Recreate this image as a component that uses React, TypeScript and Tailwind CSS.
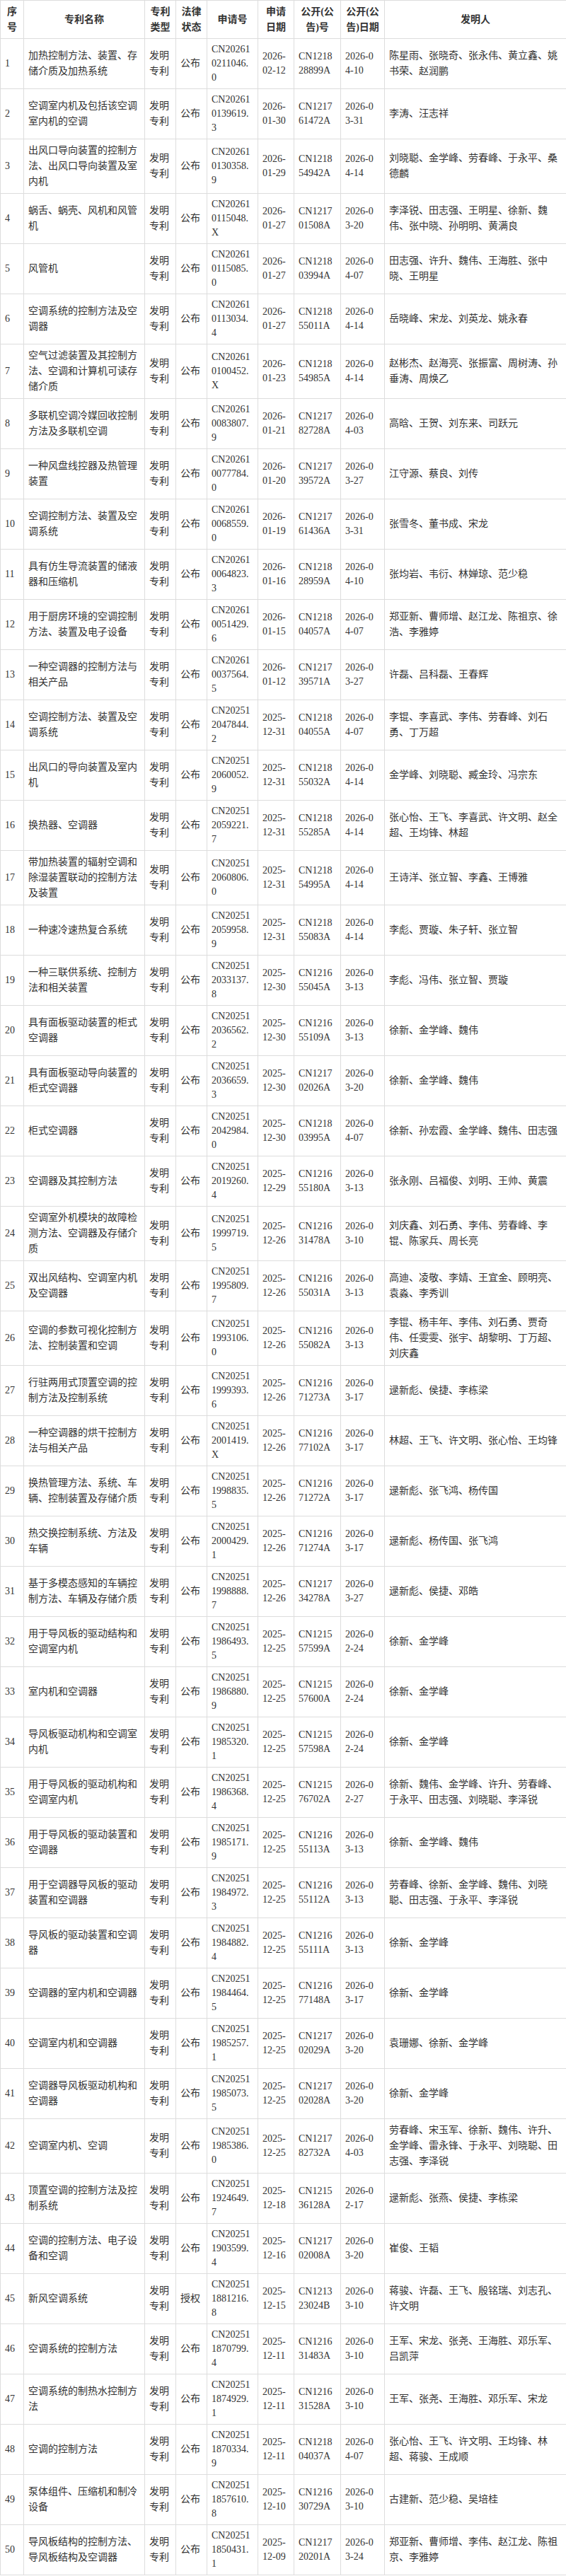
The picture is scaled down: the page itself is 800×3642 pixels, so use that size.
type Row = [number, string, string, string, string, string, string, string, string]

const FM = '发明专利'
const GB = '公布'

const rows: Row[] = [
  [1, '加热控制方法、装置、存储介质及加热系统', FM, GB, 'CN202610211046.0', '2026-02-12', 'CN121828899A', '2026-04-10', '陈星雨、张晓奇、张永伟、黄立鑫、姚书荣、赵润鹏'],
  [2, '空调室内机及包括该空调室内机的空调', FM, GB, 'CN202610139619.3', '2026-01-30', 'CN121761472A', '2026-03-31', '李涛、汪志祥'],
  [3, '出风口导向装置的控制方法、出风口导向装置及室内机', FM, GB, 'CN202610130358.9', '2026-01-29', 'CN121854942A', '2026-04-14', '刘晓聪、金学峰、劳春峰、于永平、桑德麟'],
  [4, '蜗舌、蜗壳、风机和风管机', FM, GB, 'CN202610115048.X', '2026-01-27', 'CN121701508A', '2026-03-20', '李泽锐、田志强、王明星、徐新、魏伟、张中晓、孙明明、黄满良'],
  [5, '风管机', FM, GB, 'CN202610115085.0', '2026-01-27', 'CN121803994A', '2026-04-07', '田志强、许升、魏伟、王海胜、张中晓、王明星'],
  [6, '空调系统的控制方法及空调器', FM, GB, 'CN202610113034.4', '2026-01-27', 'CN121855011A', '2026-04-14', '岳晓峰、宋龙、刘英龙、姚永春'],
  [7, '空气过滤装置及其控制方法、空调和计算机可读存储介质', FM, GB, 'CN202610100452.X', '2026-01-23', 'CN121854985A', '2026-04-14', '赵彬杰、赵海亮、张振富、周树涛、孙垂涛、周焕乙'],
  [8, '多联机空调冷媒回收控制方法及多联机空调', FM, GB, 'CN202610083807.9', '2026-01-21', 'CN121782728A', '2026-04-03', '高晗、王贺、刘东来、司跃元'],
  [9, '一种风盘线控器及热管理装置', FM, GB, 'CN202610077784.0', '2026-01-20', 'CN121739572A', '2026-03-27', '江守源、蔡良、刘传'],
  [10, '空调控制方法、装置及空调系统', FM, GB, 'CN202610068559.0', '2026-01-19', 'CN121761436A', '2026-03-31', '张雪冬、董书成、宋龙'],
  [11, '具有仿生导流装置的储液器和压缩机', FM, GB, 'CN202610064823.3', '2026-01-16', 'CN121828959A', '2026-04-10', '张均岩、韦衍、林婵琼、范少稳'],
  [12, '用于厨房环境的空调控制方法、装置及电子设备', FM, GB, 'CN202610051429.6', '2026-01-15', 'CN121804057A', '2026-04-07', '郑亚新、曹师增、赵江龙、陈祖京、徐浩、李雅婷'],
  [13, '一种空调器的控制方法与相关产品', FM, GB, 'CN202610037564.5', '2026-01-12', 'CN121739571A', '2026-03-27', '许磊、吕科磊、王春辉'],
  [14, '空调控制方法、装置及空调系统', FM, GB, 'CN202512047844.2', '2025-12-31', 'CN121804055A', '2026-04-07', '李锟、李喜武、李伟、劳春峰、刘石勇、丁万超'],
  [15, '出风口的导向装置及室内机', FM, GB, 'CN202512060052.9', '2025-12-31', 'CN121855032A', '2026-04-14', '金学峰、刘晓聪、臧金玲、冯宗东'],
  [16, '换热器、空调器', FM, GB, 'CN202512059221.7', '2025-12-31', 'CN121855285A', '2026-04-14', '张心怡、王飞、李喜武、许文明、赵全超、王均锋、林超'],
  [17, '带加热装置的辐射空调和除湿装置联动的控制方法及装置', FM, GB, 'CN202512060806.0', '2025-12-31', 'CN121854995A', '2026-04-14', '王诗洋、张立智、李鑫、王博雅'],
  [18, '一种速冷速热复合系统', FM, GB, 'CN202512059958.9', '2025-12-31', 'CN121855083A', '2026-04-14', '李彪、贾璇、朱子轩、张立智'],
  [19, '一种三联供系统、控制方法和相关装置', FM, GB, 'CN202512033137.8', '2025-12-30', 'CN121655045A', '2026-03-13', '李彪、冯伟、张立智、贾璇'],
  [20, '具有面板驱动装置的柜式空调器', FM, GB, 'CN202512036562.2', '2025-12-30', 'CN121655109A', '2026-03-13', '徐新、金学峰、魏伟'],
  [21, '具有面板驱动导向装置的柜式空调器', FM, GB, 'CN202512036659.3', '2025-12-30', 'CN121702026A', '2026-03-20', '徐新、金学峰、魏伟'],
  [22, '柜式空调器', FM, GB, 'CN202512042984.0', '2025-12-30', 'CN121803995A', '2026-04-07', '徐新、孙宏霞、金学峰、魏伟、田志强'],
  [23, '空调器及其控制方法', FM, GB, 'CN202512019260.4', '2025-12-29', 'CN121655180A', '2026-03-13', '张永刚、吕福俊、刘明、王帅、黄震'],
  [24, '空调室外机模块的故障检测方法、空调器及存储介质', FM, GB, 'CN202511999719.5', '2025-12-26', 'CN121631478A', '2026-03-10', '刘庆鑫、刘石勇、李伟、劳春峰、李锟、陈家兵、周长亮'],
  [25, '双出风结构、空调室内机及空调器', FM, GB, 'CN202511995809.7', '2025-12-26', 'CN121655031A', '2026-03-13', '高迪、凌敬、李婧、王宜金、顾明亮、袁淼、李秀训'],
  [26, '空调的参数可视化控制方法、控制装置和空调', FM, GB, 'CN202511993106.0', '2025-12-26', 'CN121655082A', '2026-03-13', '李锟、杨丰年、李伟、刘石勇、贾奇伟、任雯雯、张宇、胡黎明、丁万超、刘庆鑫'],
  [27, '行驻两用式顶置空调的控制方法及控制系统', FM, GB, 'CN202511999393.6', '2025-12-26', 'CN121671273A', '2026-03-17', '逯新彪、侯捷、李栋梁'],
  [28, '一种空调器的烘干控制方法与相关产品', FM, GB, 'CN202512001419.X', '2025-12-26', 'CN121677102A', '2026-03-17', '林超、王飞、许文明、张心怡、王均锋'],
  [29, '换热管理方法、系统、车辆、控制装置及存储介质', FM, GB, 'CN202511998835.5', '2025-12-26', 'CN121671272A', '2026-03-17', '逯新彪、张飞鸿、杨传国'],
  [30, '热交换控制系统、方法及车辆', FM, GB, 'CN202512000429.1', '2025-12-26', 'CN121671274A', '2026-03-17', '逯新彪、杨传国、张飞鸿'],
  [31, '基于多模态感知的车辆控制方法、车辆及存储介质', FM, GB, 'CN202511998888.7', '2025-12-26', 'CN121734278A', '2026-03-27', '逯新彪、侯捷、邓皓'],
  [32, '用于导风板的驱动结构和空调室内机', FM, GB, 'CN202511986493.5', '2025-12-25', 'CN121557599A', '2026-02-24', '徐新、金学峰'],
  [33, '室内机和空调器', FM, GB, 'CN202511986880.9', '2025-12-25', 'CN121557600A', '2026-02-24', '徐新、金学峰'],
  [34, '导风板驱动机构和空调室内机', FM, GB, 'CN202511985320.1', '2025-12-25', 'CN121557598A', '2026-02-24', '徐新、金学峰'],
  [35, '用于导风板的驱动机构和空调室内机', FM, GB, 'CN202511986368.4', '2025-12-25', 'CN121576702A', '2026-02-27', '徐新、魏伟、金学峰、许升、劳春峰、于永平、田志强、刘晓聪、李泽锐'],
  [36, '用于导风板的驱动装置和空调器', FM, GB, 'CN202511985171.9', '2025-12-25', 'CN121655113A', '2026-03-13', '徐新、金学峰、魏伟'],
  [37, '用于空调器导风板的驱动装置和空调器', FM, GB, 'CN202511984972.3', '2025-12-25', 'CN121655112A', '2026-03-13', '劳春峰、徐新、金学峰、魏伟、刘晓聪、田志强、于永平、李泽锐'],
  [38, '导风板的驱动装置和空调器', FM, GB, 'CN202511984882.4', '2025-12-25', 'CN121655111A', '2026-03-13', '徐新、金学峰'],
  [39, '空调器的室内机和空调器', FM, GB, 'CN202511984464.5', '2025-12-25', 'CN121677148A', '2026-03-17', '徐新、金学峰'],
  [40, '空调室内机和空调器', FM, GB, 'CN202511985257.1', '2025-12-25', 'CN121702029A', '2026-03-20', '袁珊娜、徐新、金学峰'],
  [41, '空调器导风板驱动机构和空调器', FM, GB, 'CN202511985073.5', '2025-12-25', 'CN121702028A', '2026-03-20', '徐新、金学峰'],
  [42, '空调室内机、空调', FM, GB, 'CN202511985386.0', '2025-12-25', 'CN121782732A', '2026-04-03', '劳春峰、宋玉军、徐新、魏伟、许升、金学峰、雷永锋、于永平、刘晓聪、田志强、李泽锐'],
  [43, '顶置空调的控制方法及控制系统', FM, GB, 'CN202511924649.7', '2025-12-18', 'CN121536128A', '2026-02-17', '逯新彪、张燕、侯捷、李栋梁'],
  [44, '空调的控制方法、电子设备和空调', FM, GB, 'CN202511903599.4', '2025-12-16', 'CN121702008A', '2026-03-20', '崔俊、王韬'],
  [45, '新风空调系统', FM, '授权', 'CN202511881216.8', '2025-12-15', 'CN121323024B', '2026-03-10', '蒋骏、许磊、王飞、殷铭瑞、刘志孔、许文明'],
  [46, '空调系统的控制方法', FM, GB, 'CN202511870799.4', '2025-12-11', 'CN121631483A', '2026-03-10', '王军、宋龙、张尧、王海胜、邓乐军、吕凯萍'],
  [47, '空调系统的制热水控制方法', FM, GB, 'CN202511874929.1', '2025-12-11', 'CN121631528A', '2026-03-10', '王军、张尧、王海胜、邓乐军、宋龙'],
  [48, '空调的控制方法', FM, GB, 'CN202511870334.9', '2025-12-11', 'CN121804037A', '2026-04-07', '张心怡、王飞、许文明、王均锋、林超、蒋骏、王成顺'],
  [49, '泵体组件、压缩机和制冷设备', FM, GB, 'CN202511857610.8', '2025-12-10', 'CN121630729A', '2026-03-10', '古建新、范少稳、吴培桂'],
  [50, '导风板结构的控制方法、导风板结构及空调器', FM, GB, 'CN202511850431.1', '2025-12-09', 'CN121720201A', '2026-03-24', '郑亚新、曹师增、李伟、赵江龙、陈祖京、李雅婷'],
]

// cell styles
const cell = 'border border-[#dddddd] py-[5px] pl-[6px] align-middle text-left font-normal'
const cjk = `${cell} pr-[6px] leading-[22px]`
const num = `${cell} leading-[20px] break-all`
const th = 'border border-[#dddddd] px-[6px] py-[5px] align-middle text-center font-bold leading-[21.5px]'

export default function App() {
  return (
    <div className="bg-white w-[800px] text-[#333333]">
      <table className="w-[800px] table-fixed border-collapse text-[14px] font-[family-name:'Liberation_Serif','Noto_Sans_CJK_SC',serif]">
        <colgroup>
          <col className="w-[33px]" />
          <col className="w-[171px]" />
          <col className="w-[44px]" />
          <col className="w-[44px]" />
          <col className="w-[72px]" />
          <col className="w-[51px]" />
          <col className="w-[66px]" />
          <col className="w-[62px]" />
          <col className="w-[257px]" />
        </colgroup>
        <thead>
          <tr>
            <th className={th}>序号</th>
            <th className={th}>专利名称</th>
            <th className={th}>专利类型</th>
            <th className={th}>法律状态</th>
            <th className={th}>申请号</th>
            <th className={th}>申请日期</th>
            <th className={th}>公开(公告)号</th>
            <th className={th}>公开(公告)日期</th>
            <th className={th}>发明人</th>
          </tr>
        </thead>
        <tbody>
          {rows.map((r) => (
            <tr key={r[0]}>
              <td className={`${num} pr-[6px]`}>{r[0]}</td>
              <td className={cjk}>{r[1]}</td>
              <td className={cjk}>{r[2]}</td>
              <td className={cjk}>{r[3]}</td>
              <td className={`${num} pr-[7px]`}>{r[4]}</td>
              <td className={`${num} pr-[6px]`}>{r[5]}</td>
              <td className={`${num} pr-[6px]`}>{r[6]}</td>
              <td className={`${num} pr-[10px]`}>{r[7]}</td>
              <td className={cjk}>{r[8]}</td>
            </tr>
          ))}
        </tbody>
      </table>
    </div>
  )
}
